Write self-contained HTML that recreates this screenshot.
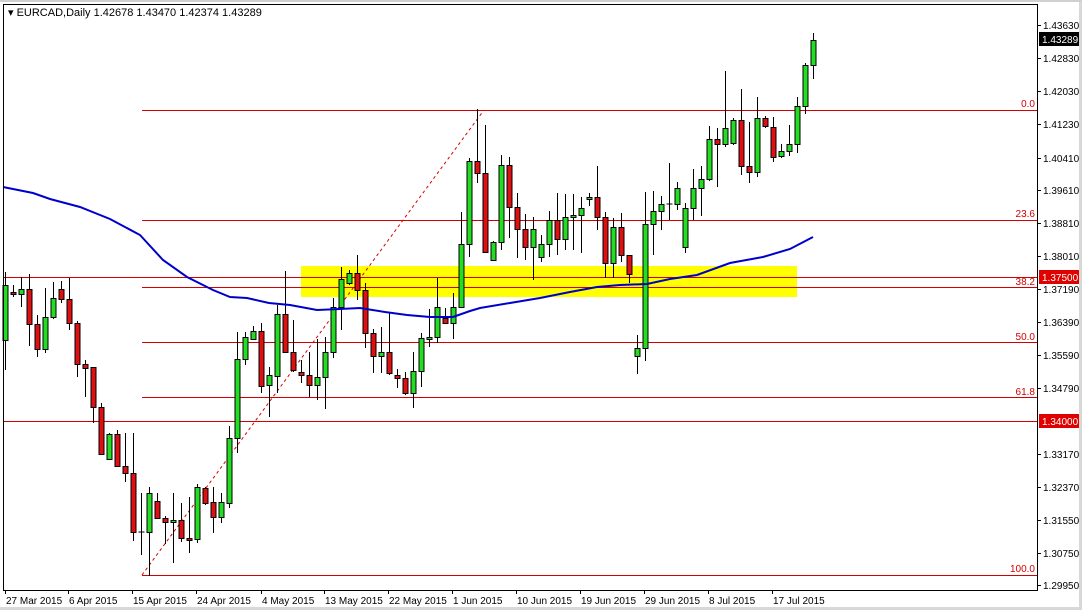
<!DOCTYPE html>
<html><head><meta charset="utf-8"><style>
html,body{margin:0;padding:0;background:#fff;width:1082px;height:610px;overflow:hidden}
svg{display:block;font-family:"Liberation Sans",Tahoma,sans-serif}
</style></head><body>
<svg id="s" width="1082" height="610" viewBox="0 0 1082 610" xmlns="http://www.w3.org/2000/svg">
<rect x="0" y="0" width="1082" height="610" fill="#fff"/>
<rect x="1079" y="0" width="3" height="610" fill="#d8d8d8"/>
<rect x="0" y="607" width="1082" height="3" fill="#d8d8d8"/>
<rect x="0" y="0" width="1082" height="2" fill="#d0d0d0"/>
<!-- yellow zone -->
<rect x="301" y="266" width="496" height="31" fill="#ffff00"/>
<!-- fib lines -->
<g stroke="#d40000" stroke-width="1">
<line x1="142" y1="110.5" x2="1037" y2="110.5"/>
<line x1="142" y1="220.5" x2="1037" y2="220.5"/>
<line x1="142" y1="287.5" x2="1037" y2="287.5"/>
<line x1="142" y1="342.5" x2="1037" y2="342.5"/>
<line x1="142" y1="397.5" x2="1037" y2="397.5"/>
<line x1="142" y1="575.5" x2="1037" y2="575.5"/>
<line x1="3" y1="277.5" x2="1037" y2="277.5"/>
<line x1="3" y1="421.5" x2="1037" y2="421.5"/>
</g>
<line x1="142" y1="575" x2="484" y2="110" stroke="#d40000" stroke-width="1" stroke-dasharray="3,3"/>
<g fill="#d40000" font-size="10" text-anchor="end">
<text x="1035" y="107">0.0</text>
<text x="1035" y="217">23.6</text>
<text x="1035" y="285">38.2</text>
<text x="1035" y="340">50.0</text>
<text x="1035" y="395">61.8</text>
<text x="1035" y="572">100.0</text>
</g>
<g id="c"></g>
<polyline fill="none" stroke="#0000cc" stroke-width="2" points="3,187 33,193 50,199 80,207 110,219 140,235 163,260 187,277 213,290 230,297 247,298 269,303 290,305 317,310 340,309 360,308 385,312 407,315 430,317 453,317 470,311 480,308 510,303 540,298 570,292 597,287 620,285 647,284 670,279 697,275 730,263 763,257 790,249 813,237"/>
<!-- frame -->
<rect x="3.5" y="4.5" width="1034" height="586" fill="none" stroke="#000" stroke-width="1"/>
<g font-size="10" fill="#000">
<text x="8" y="16" font-size="11">▾ EURCAD,Daily  1.42678 1.43470 1.42374 1.43289</text>
</g>
<g id="ax" font-size="10" fill="#000"></g>
<rect x="1039" y="32" width="40" height="14" fill="#000"/>
<text x="1042" y="43" font-size="10" fill="#fff">1.43289</text>
<rect x="1039" y="270" width="40" height="14" fill="#e00000"/>
<text x="1042" y="281" font-size="10" fill="#fff">1.37500</text>
<rect x="1039" y="414" width="40" height="14" fill="#e00000"/>
<text x="1042" y="425" font-size="10" fill="#fff">1.34000</text>
</svg>
<script>
var d=[
[285,340,272,370,'g'],[292,294,285,297,'r'],[289,294,277,307,'g'],[289,324,274,346,'r'],[324,349,315,357,'r'],
[317,349,288,353,'g'],[298,317,282,319,'g'],[289,299,281,303,'r'],[299,323,278,330,'r'],[323,364,321,377,'r'],
[364,368,360,397,'r'],[367,407,367,423,'r'],[407,454,403,454,'r'],[434,459,433,460,'g'],[434,466,430,467,'r'],
[466,473,433,482,'r'],[473,532,433,541,'r'],[531,533,493,555,'k'],[493,532,487,576,'g'],[501,518,493,519,'r'],
[518,522,516,544,'r'],[520,522,493,563,'g'],[520,538,503,542,'r'],[538,540,497,553,'r'],[487,539,484,543,'g'],
[488,503,487,505,'r'],[502,517,487,533,'r'],[502,517,493,523,'g'],[438,503,426,508,'g'],[359,438,332,453,'g'],
[337,359,332,365,'g'],[331,339,326,340,'g'],[331,386,323,393,'r'],[375,385,367,417,'g'],[314,376,305,393,'g'],
[314,352,271,353,'r'],[352,370,320,372,'r'],[372,375,360,383,'r'],[375,385,352,397,'r'],[377,385,339,400,'g'],
[352,377,337,409,'g'],[307,352,298,358,'g'],[279,307,267,330,'g'],[273,283,270,285,'g'],[273,290,255,300,'r'],
[290,333,283,348,'r'],[333,356,329,373,'r'],[352,356,327,373,'g'],[352,373,313,375,'r'],[375,378,369,388,'r'],
[378,393,372,395,'r'],[371,393,352,408,'g'],[338,371,333,387,'g'],[337,339,309,347,'g'],[307,337,278,343,'g'],
[318,323,308,324,'r'],[307,323,293,339,'g'],[244,307,212,308,'g'],[161,244,158,257,'g'],[161,173,109,183,'r'],
[173,252,125,253,'r'],[242,260,241,261,'g'],[165,242,155,250,'g'],[165,207,157,238,'r'],[207,229,193,258,'r'],
[229,247,214,260,'r'],[229,247,217,280,'g'],[244,257,235,262,'g'],[220,244,211,257,'g'],[220,239,193,255,'r'],
[217,239,194,250,'g'],[215,217,194,250,'g'],[208,215,197,253,'g'],[197,199,193,206,'g'],[197,217,166,230,'r'],
[217,263,212,278,'r'],[227,263,218,278,'g'],[227,255,213,262,'r'],[255,274,255,283,'r'],[348,356,335,374,'g'],
[224,348,192,361,'g'],[211,224,191,255,'g'],[204,211,196,230,'g'],[203,205,163,220,'k'],[188,204,182,210,'g'],
[208,247,203,253,'g'],[188,208,169,220,'g'],[179,188,166,216,'g'],[139,179,126,181,'g'],[139,144,128,187,'r'],
[128,144,71,147,'g'],[120,143,118,145,'g'],[120,166,89,175,'r'],[166,172,122,183,'r'],[118,172,97,177,'g'],
[118,126,116,128,'r'],[127,157,117,162,'r'],[151,156,144,158,'g'],[144,151,125,156,'g'],[106,144,97,153,'g'],
[65,106,63,114,'g'],[40,65,33,79,'g']];
var ns="http://www.w3.org/2000/svg",g=document.getElementById('c');
function el(t,a){var e=document.createElementNS(ns,t);for(var k in a)e.setAttribute(k,a[k]);g.appendChild(e);return e;}
d.forEach(function(c,i){var x=5+8*i+0.5;
el('line',{x1:x,y1:c[2],x2:x,y2:c[3],stroke:'#000','stroke-width':1});
if(c[4]=='k'){el('line',{x1:x-3,y1:c[0]+1,x2:x+3,y2:c[0]+1,stroke:'#000','stroke-width':1});return;}
var h=Math.max(1,c[1]-c[0]);
el('rect',{x:x-2.5,y:c[0]+0.5,width:5,height:h,fill:c[4]=='g'?'#22dd22':'#dd1111',stroke:'#000','stroke-width':1});
});
var ax=document.getElementById('ax');
function t(tag,a,txt){var e=document.createElementNS(ns,tag);for(var k in a)e.setAttribute(k,a[k]);if(txt)e.textContent=txt;ax.appendChild(e);}
[["1.43630",25],["1.42830",58],["1.42030",91],["1.41230",124],["1.40410",158],["1.39610",190],["1.38810",223],["1.38010",256],["1.37190",289],["1.36390",322],["1.35590",355],["1.34790",388],["1.33170",454],["1.32370",487],["1.31550",520],["1.30750",553],["1.29950",585]].forEach(function(p){
t('line',{x1:1037,y1:p[1]+0.5,x2:1041,y2:p[1]+0.5,stroke:'#000'});
t('text',{x:1043,y:p[1]+4},p[0]);});
[["27 Mar 2015",5],["6 Apr 2015",68],["15 Apr 2015",132],["24 Apr 2015",196],["4 May 2015",261],["13 May 2015",324],["22 May 2015",388],["1 Jun 2015",452],["10 Jun 2015",516],["19 Jun 2015",580],["29 Jun 2015",644],["8 Jul 2015",708],["17 Jul 2015",772]].forEach(function(p){
t('line',{x1:p[1]+0.5,y1:590,x2:p[1]+0.5,y2:594,stroke:'#000'});
t('text',{x:p[1]+1,y:604},p[0]);});
</script>
</body></html>
